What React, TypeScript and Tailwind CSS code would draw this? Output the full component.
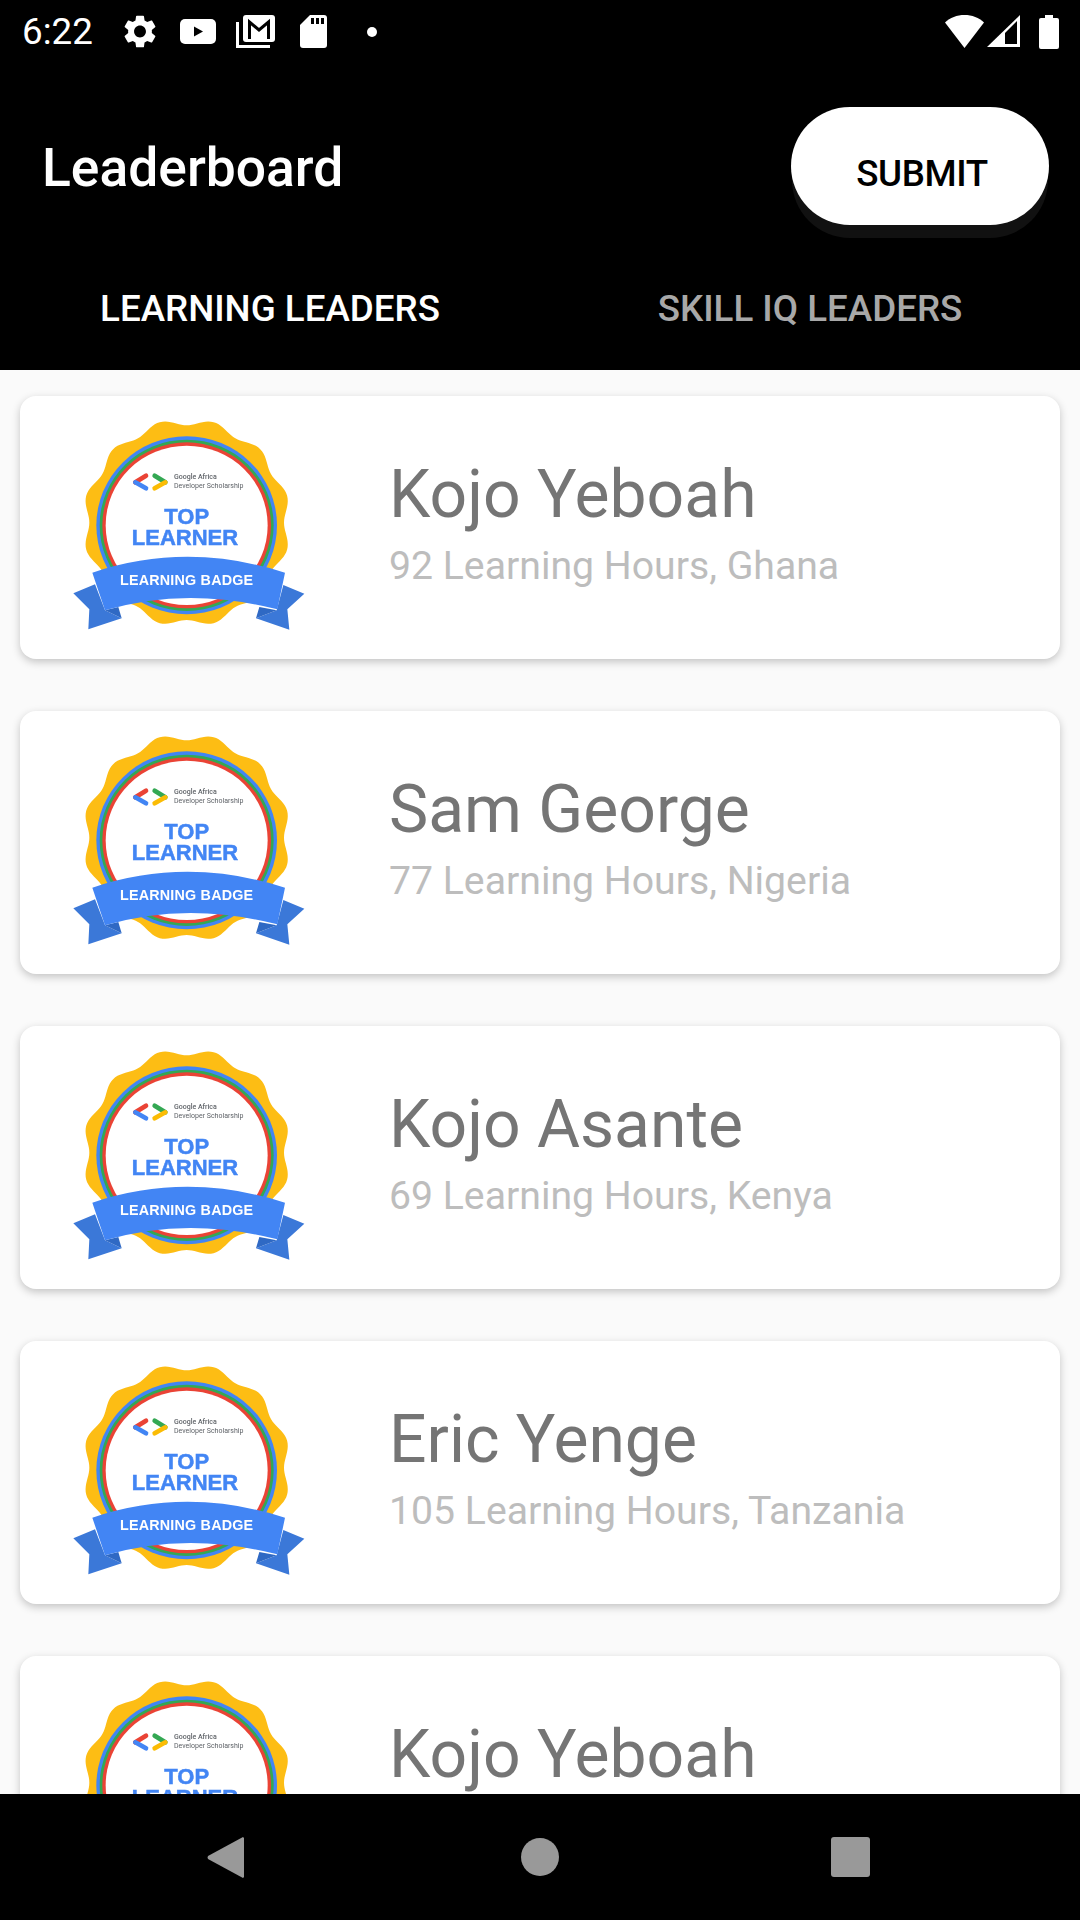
const leaders = [
  { name: "Kojo Yeboah", detail: "92 Learning Hours, Ghana" },
  { name: "Sam George", detail: "77 Learning Hours, Nigeria" },
  { name: "Kojo Asante", detail: "69 Learning Hours, Kenya" },
  { name: "Eric Yenge", detail: "105 Learning Hours, Tanzania" },
  { name: "Kojo Yeboah", detail: "92 Learning Hours, Ghana" },
];

// wavy gold edge of the badge, 12 humps with a dip at the top
const scallop = (() => {
  const pts: string[] = [];
  for (let i = 0; i < 240; i++) {
    const a = (i / 240) * Math.PI * 2;
    const r = 302 - 10 * Math.cos(12 * a);
    pts.push(`${(410 + r * Math.sin(a)).toFixed(1)},${(365 - r * Math.cos(a)).toFixed(1)}`);
  }
  return pts.join(" ");
})();

function Badge() {
  return (
    <svg viewBox="0 0 840 750" className="w-[280px] h-[250px] shrink-0 blur-[0.6px]">
      <polygon points={scallop} fill="#fdbd14" />
      <ellipse cx="410" cy="373" rx="271" ry="267" fill="#4285f4" />
      <ellipse cx="410" cy="373" rx="261" ry="257" fill="#34a853" />
      <ellipse cx="410" cy="373" rx="253" ry="249" fill="#ea4335" />
      <ellipse cx="410" cy="373" rx="243" ry="239" fill="#ffffff" />
      <g strokeWidth="14" strokeLinecap="round" fill="none">
        <path d="M288 224 L256 244" stroke="#ea4335" />
        <path d="M256 244 L288 262" stroke="#4285f4" />
        <path d="M314 224 L346 244" stroke="#34a853" />
        <path d="M346 244 L314 262" stroke="#fbbc04" />
      </g>
      <text x="372" y="234" fontFamily="Roboto" fontSize="21" fontWeight="500" fill="#5f6368">Google Africa</text>
      <text x="372" y="261" fontFamily="Roboto" fontSize="21" fill="#5f6368">Developer Scholarship</text>
      <text x="410" y="368" textAnchor="middle" fontFamily="Liberation Sans" fontSize="66" fontWeight="700" stroke="#4285f4" strokeWidth="1.5" fill="#4285f4">TOP</text>
      <text x="405" y="432" textAnchor="middle" fontFamily="Liberation Sans" fontSize="66" fontWeight="700" stroke="#4285f4" strokeWidth="1.5" fill="#4285f4">LEARNER</text>
      <polygon points="70,577 135,550 165,628 215,652 115,685 118,625" fill="#3b78d8" />
      <polygon points="165,628 215,652 205,618" fill="#2f69c4" />
      <polygon points="763,578 700,552 680,628 618,652 718,686 712,625" fill="#3b78d8" />
      <polygon points="680,628 618,652 628,618" fill="#2f69c4" />
      <path d="M127 515 Q410 420 705 515 L682 625 Q410 555 165 628 Z" fill="#4285f4" />
      <text x="410" y="552" textAnchor="middle" fontFamily="Liberation Sans" fontSize="43" fontWeight="700" letterSpacing="0.6" fill="#ffffff">LEARNING BADGE</text>
    </svg>
  );
}

function StatusBar() {
  return (
    <div className="h-[63px] shrink-0 flex items-center text-white pl-[22px] pr-[21px]">
      <span className="text-[36.75px] leading-none mt-[1px] w-[102px]">6:22</span>
      <svg viewBox="2.5 2 19 20" className="w-[32px] h-[33px] fill-white">
        <path
          fillRule="evenodd"
          d="M19.14 12.94c.04-.3.06-.61.06-.94 0-.32-.02-.64-.07-.94l2.03-1.58c.18-.14.23-.41.12-.61l-1.92-3.32c-.12-.22-.37-.29-.59-.22l-2.39.96c-.5-.38-1.03-.7-1.62-.94l-.36-2.54c-.04-.24-.24-.41-.48-.41h-3.84c-.24 0-.43.17-.47.41l-.36 2.54c-.59.24-1.13.57-1.62.94l-2.39-.96c-.22-.08-.47 0-.59.22L2.74 8.87c-.12.21-.08.47.12.61l2.03 1.58c-.05.3-.09.63-.09.94s.02.64.07.94l-2.03 1.58c-.18.14-.23.41-.12.61l1.92 3.32c.12.22.37.29.59.22l2.39-.96c.5.38 1.03.7 1.62.94l.36 2.54c.05.24.24.41.48.41h3.84c.24 0 .44-.17.47-.41l.36-2.54c.59-.24 1.13-.56 1.62-.94l2.39.96c.22.08.47 0 .59-.22l1.92-3.32c.12-.22.07-.47-.12-.61l-2.01-1.58zM12 15.6c-1.98 0-3.6-1.62-3.6-3.6s1.62-3.6 3.6-3.6 3.6 1.62 3.6 3.6-1.62 3.6-3.6 3.6z"
        />
      </svg>
      <svg viewBox="0 0 36 25" className="w-[36px] h-[25px] ml-[24px]">
        <rect width="36" height="25" rx="5" fill="#fff" />
        <path d="M14 7.5 L14 17.5 L23 12.5 Z" fill="#000" />
      </svg>
      <svg viewBox="0 0 39 33" className="w-[39px] h-[33px] ml-[20px]">
        <path d="M1.5 7 V31.5 H34" fill="none" stroke="#fff" strokeWidth="3" />
        <rect x="7" y="0" width="32" height="27" rx="3" fill="#fff" />
        <path d="M13.5 24 V7 L23 15 L32.5 7 V24" fill="none" stroke="#000" strokeWidth="3" />
      </svg>
      <svg viewBox="0 0 27 33" className="w-[27px] h-[33px] ml-[25px]">
        <path d="M10 0 H24 Q27 0 27 3 V30 Q27 33 24 33 H3 Q0 33 0 30 V10 Z" fill="#fff" />
        <path d="M11 3 H14 V9 H11 Z M16 3 H19 V9 H16 Z M21 3 H24 V9 H21 Z" fill="#000" />
      </svg>
      <div className="w-[10px] h-[10px] rounded-full bg-white ml-[40px]" />
      <svg viewBox="0 0 39 33" className="w-[39px] h-[33px] ml-auto fill-white">
        <path d="M19.5 0 C27 0 34 2.5 39 7.5 L19.5 33 L0 7.5 C5 2.5 12 0 19.5 0 Z" />
      </svg>
      <svg viewBox="0 0 33 33" className="w-[33px] h-[33px] ml-[3px]">
        <path d="M33 0 V32 H0 Z" fill="#fff" />
        <path d="M18 18 L30 6 V29 H18 Z" fill="#000" />
      </svg>
      <svg viewBox="0 0 20 34" className="w-[20px] h-[34px] ml-[19px]">
        <path d="M6 0 H14 V3 H18 Q20 3 20 5 V32 Q20 34 18 34 H2 Q0 34 0 32 V5 Q0 3 2 3 H6 Z" fill="#fff" />
      </svg>
    </div>
  );
}

function NavBar() {
  return (
    <div className="h-[126px] shrink-0 bg-black relative z-10 flex items-center justify-center">
      <div className="flex items-center -ml-[3px]">
        <svg viewBox="0 0 37 41" className="w-[37px] h-[41px]">
          <path d="M37 1 V40 L36 41 L1 22 Q0 20.5 1 19 L36 0 Z" fill="#999" />
        </svg>
        <div className="w-[38px] h-[38px] rounded-full bg-[#999] ml-[277px]" />
        <div className="w-[39px] h-[40px] rounded-[3px] bg-[#999] ml-[272px]" />
      </div>
    </div>
  );
}

export default function App() {
  return (
    <div className="w-[1080px] h-[1920px] flex flex-col bg-[#fafafa] font-['Roboto',sans-serif] overflow-hidden">
      <div className="bg-black shrink-0 h-[370px] flex flex-col">
        <StatusBar />
        <div className="flex items-start justify-between pl-[42px] pr-[31px] pt-[44px] h-[195px]">
          <h1 className="text-[53.4px] leading-[62px] mt-[30px] font-medium text-white">Leaderboard</h1>
          <button className="w-[258px] h-[118px] rounded-[59px] bg-white text-black text-[36.75px] font-medium tracking-[-0.4px] pt-[16px] pl-[4px] shadow-[0_14px_0_-1px_#111]">
            SUBMIT
          </button>
        </div>
        <div className="grid grid-cols-2 flex-1 text-[36.75px] font-medium text-center">
          <div className="text-white leading-[102px]">LEARNING LEADERS</div>
          <div className="text-[#a8a8a8] leading-[102px]">SKILL IQ LEADERS</div>
        </div>
      </div>
      <div className="flex-1 overflow-hidden px-[20px] pt-[26px] flex flex-col gap-[52px]">
        {leaders.map((leader, index) => (
          <div
            key={index}
            className="h-[263px] shrink-0 rounded-[16px] bg-white shadow-[0_3px_8px_rgba(0,0,0,0.22)] flex items-start"
          >
            <div className="ml-[30px] mt-[5px]">
              <Badge />
            </div>
            <div className="ml-[59px] mt-[50px]">
              <div className="text-[66px] leading-[98px] text-[#757575]">{leader.name}</div>
              <div className="text-[39.2px] leading-[44px] text-[#bdbdbd]">{leader.detail}</div>
            </div>
          </div>
        ))}
      </div>
      <NavBar />
    </div>
  );
}
